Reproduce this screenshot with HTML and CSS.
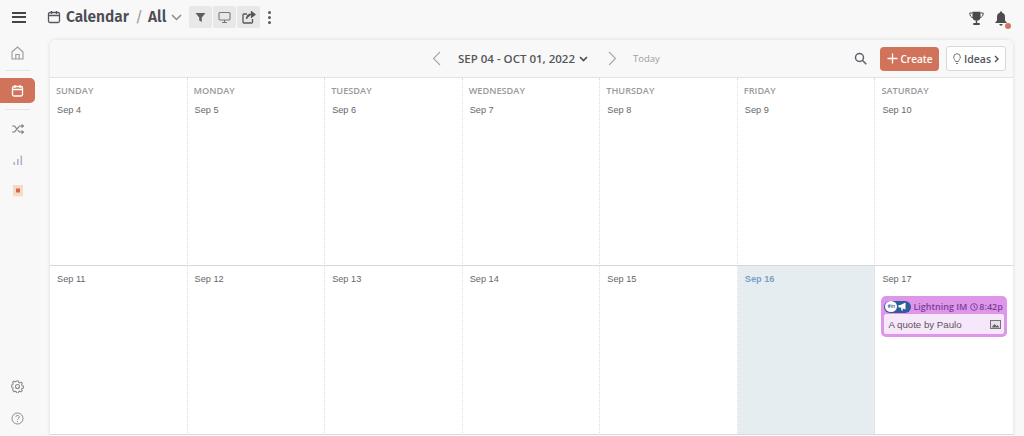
FILE: index.html
```html
<!DOCTYPE html>
<html lang="en">
<head>
<meta charset="utf-8">
<title>Calendar</title>
<link rel="stylesheet" href="styles.css">
</head>
<body>
<header class="topbar">
  <button class="burger" aria-label="Menu"><span></span><span></span><span></span></button>
  <div class="crumbs">
    <svg class="crumb-icon" width="14" height="14" viewBox="0 0 14 14" fill="none" stroke="#5a5560" stroke-width="1.3"><rect x="1.5" y="2.5" width="11" height="10" rx="1.5"/><path d="M1.5 5.5h11M4.5 1v3M9.5 1v3"/></svg>
    <span class="crumb-title">Calendar</span>
    <span class="crumb-sep">/</span>
    <span class="crumb-all">All</span>
    <svg width="11" height="7" viewBox="0 0 11 7" fill="none" stroke="#8a8a90" stroke-width="1.5"><path d="M1 1l4.5 4.5L10 1"/></svg>
  </div>
  <div class="tools">
    <span class="tool"><svg width="11" height="11" viewBox="0 0 11 11" fill="#5c5c62"><path d="M0.5 1h10L6.8 5.6V10L4.2 8.6V5.6z"/></svg></span>
    <span class="tool"><svg width="13" height="13" viewBox="0 0 13 13" fill="none" stroke="#77777c" stroke-width="1.1"><rect x="1" y="1.5" width="11" height="7.5" rx="1"/><path d="M6.5 9v2M4 11.5h5"/></svg></span>
    <span class="tool"><svg width="14" height="13" viewBox="0 0 14 13" fill="none" stroke="#55555c" stroke-width="1.3"><path d="M10.5 8v3a1 1 0 0 1-1 1H2a1 1 0 0 1-1-1V4a1 1 0 0 1 1-1h3"/><path d="M13 3.5L9.5 0.8v5.4zM9.5 3.2C7 3.2 4.8 4.6 4.5 8" fill="#55555c"/></svg></span>
    <span class="kebab"><i></i><i></i><i></i></span>
  </div>
  <div class="top-right">
    <svg width="15" height="15" viewBox="0 0 15 15" fill="#4e4a4a"><path d="M3.5 0.8h8v5a4 4 0 0 1-8 0z"/><path d="M3.5 2H0.8c0 2.6 1 4.2 3.2 4.6M11.500 2h2.700c0 2.600-1 4.200-3.200 4.600" fill="none" stroke="#4e4a4a" stroke-width="1"/><path d="M6.800 9.500h1.400v2.500H6.800zM4.300 12h6.400v2H4.300z"/></svg>
    <span class="bell">
      <svg width="14" height="16" viewBox="0 0 14 16" fill="#4e4a4e"><path d="M7 0.500c.8 0 1.200.5 1.200 1.200C10.400 2.300 11 4 11 6v3.500l2 2.500H1l2-2.500V6c0-2 .6-3.700 2.800-4.300C5.800 1 6.200.500 7 .500zM5.300 13h3.400a1.700 1.700 0 0 1-3.400 0z"/></svg>
      <i class="bell-dot"></i>
    </span>
  </div>
</header>
<div class="main">
  <nav class="side">
    <div class="side-top">
      <span class="side-item"><svg width="13" height="14" viewBox="0 0 13 14" fill="none" stroke="#9a9a9f" stroke-width="1.1"><path d="M1 6l5.500-5L12 6v7H1z"/><path d="M4.800 13V8.500h3.400V13"/></svg></span>
      <span class="side-rule"></span>
      <span class="side-item active"><svg width="13" height="13" viewBox="0 0 13 13" fill="none" stroke="#fff" stroke-width="1.300"><rect x="1.500" y="2.500" width="10" height="9.500" rx="1.500"/><path d="M1.500 5.500h10M4 1v3M9 1v3"/></svg></span>
      <span class="side-rule"></span>
      <span class="side-item"><svg width="12" height="10" viewBox="0 0 12 10" fill="none" stroke="#85858a" stroke-width="1.200"><path d="M0 2h2.500l5 6H11M0 8h2.500l5-6H11M9.500 0.500L11.500 2l-2 1.500M9.500 6.500L11.500 8l-2 1.500"/></svg></span>
      <span class="side-item"><svg width="10" height="10" viewBox="0 0 10 10" fill="#a9b6c8"><rect x="0.500" y="7" width="1.600" height="3"/><rect x="4" y="4" width="1.600" height="6"/><rect x="7.500" y="0.500" width="1.600" height="9.500"/></svg></span>
      <span class="side-item"><svg width="10" height="12" viewBox="0 0 10 12"><path d="M0 0h10v12l-2-1.500-1.500 1.500L5 10.500 3.500 12 2 10.500 0 12z" fill="#f5dac5"/><rect x="3" y="3.500" width="4" height="4" fill="#d9674e"/></svg></span>
    </div>
    <div class="side-bottom">
      <span class="side-item"><svg width="13" height="13" viewBox="0 0 13 13" fill="none" stroke="#8a8a92" stroke-width="1.100"><circle cx="6.500" cy="6.500" r="2"/><path d="M5.500 1h2l.3 1.500 1.300.6 1.300-.8 1.400 1.400-.8 1.300.6 1.300 1.400.3v2l-1.500.3-.6 1.200.8 1.300-1.400 1.400-1.300-.8-1.300.5-.2 1.500h-2l-.3-1.500-1.300-.5-1.300.8L1.200 10.400l.8-1.300-.5-1.200L0 7.500v-2l1.500-.3.500-1.300-.8-1.300L2.600 1.200l1.300.8 1.300-.6z" transform="scale(.93) translate(.4 0)"/></svg></span>
      <span class="side-item"><svg width="13" height="13" viewBox="0 0 13 13" fill="none" stroke="#8a8a92" stroke-width="1"><circle cx="6.500" cy="6.500" r="5.500"/><path d="M4.800 5.200c0-2.300 3.500-2.300 3.500-.2 0 1.300-1.800 1.500-1.800 2.800M6.500 9v1"/></svg></span>
    </div>
  </nav>
  <section class="card">
    <div class="toolbar">
      <div class="range">
        <svg width="9" height="15" viewBox="0 0 9 15" fill="none" stroke="#a8a8a8" stroke-width="1.100"><path d="M8 1L1.500 7.500 8 14"/></svg>
        <span class="range-text">SEP 04 - OCT 01, 2022</span>
        <svg class="range-caret" width="9" height="6" viewBox="0 0 9 6" fill="none" stroke="#4f4f55" stroke-width="1.700"><path d="M1 1l3.500 3.500L8 1"/></svg>
        <svg class="range-next" width="9" height="15" viewBox="0 0 9 15" fill="none" stroke="#a8a8a8" stroke-width="1.100"><path d="M1 1l6.500 6.500L1 14"/></svg>
        <span class="today">Today</span>
      </div>
      <div class="actions">
        <svg width="13" height="13" viewBox="0 0 13 13" fill="none" stroke="#5f6068" stroke-width="1.500"><circle cx="5.500" cy="5.500" r="4"/><path d="M8.500 8.500l3.800 3.800"/></svg>
        <span class="create"><svg width="11" height="11" viewBox="0 0 11 11" stroke="#fff" stroke-width="1.300"><path d="M5.500 0.500v10M0.500 5.500h10"/></svg>Create</span>
        <span class="ideas"><svg width="8" height="12" viewBox="0 0 8 12" fill="none" stroke="#77777c" stroke-width="1"><path d="M2.500 8.500C2.200 6.800.7 6.200.7 4a3.300 3.300 0 0 1 6.600 0c0 2.200-1.500 2.800-1.800 4.500zM3 10.500h2"/></svg>Ideas<svg width="5" height="8" viewBox="0 0 5 8" fill="none" stroke="#4f4f55" stroke-width="1.400"><path d="M1 1l3 3-3 3"/></svg></span>
      </div>
    </div>
    <div class="calendar">
      <div class="cell row-one"><div class="dow">SUNDAY</div><div class="date">Sep 4</div></div>
      <div class="cell row-one"><div class="dow">MONDAY</div><div class="date">Sep 5</div></div>
      <div class="cell row-one"><div class="dow">TUESDAY</div><div class="date">Sep 6</div></div>
      <div class="cell row-one"><div class="dow">WEDNESDAY</div><div class="date">Sep 7</div></div>
      <div class="cell row-one"><div class="dow">THURSDAY</div><div class="date">Sep 8</div></div>
      <div class="cell row-one"><div class="dow">FRIDAY</div><div class="date">Sep 9</div></div>
      <div class="cell row-one"><div class="dow">SATURDAY</div><div class="date">Sep 10</div></div>
      <div class="cell row-two"><div class="date">Sep 11</div></div>
      <div class="cell row-two"><div class="date">Sep 12</div></div>
      <div class="cell row-two"><div class="date">Sep 13</div></div>
      <div class="cell row-two"><div class="date">Sep 14</div></div>
      <div class="cell row-two"><div class="date">Sep 15</div></div>
      <div class="cell row-two current"><div class="date">Sep 16</div></div>
      <div class="cell row-two">
        <div class="date">Sep 17</div>
        <div class="event">
          <div class="event-head">
            <span class="pill"><span class="pill-logo">#in</span><svg width="9" height="9" viewBox="0 0 9 9" fill="#fff"><path d="M0.500 3h2L7.500 0.500v7L2.500 5.500h-2zM3 6h1.500l.5 2.500H3.500z"/></svg></span>
            <span class="event-name">Lightning IM</span>
            <svg width="8" height="8" viewBox="0 0 8 8" fill="none" stroke="#7d3f95" stroke-width=".9"><circle cx="4" cy="4" r="3.400"/><path d="M4 2v2.200l1.500.8"/></svg>
            <span class="event-time">8:42p</span>
          </div>
          <div class="event-body"><span>A quote by Paulo</span><svg width="11" height="9" viewBox="0 0 11 9"><rect x=".5" y=".5" width="10" height="8" fill="#e6e0e8" stroke="#77727c"/><path d="M1.500 7.500l3-3.500 2 2 1-1 2 2.500z" fill="#66606c"/></svg></div>
        </div>
      </div>
    </div>
  </section>
</div>
</body>
</html>
```
FILE: styles.css
```css
* { box-sizing: border-box; }
html, body { height: 100%; }
body {
  margin: 0;
  background: #f8f8f8;
  font-family: "Liberation Sans", Arial, sans-serif;
  overflow: hidden;
  color: #55555a;
}
.topbar {
  height: 40px;
  display: flex;
  align-items: center;
  padding: 0 15px 6px 12px;
}
.burger {
  width: 14px;
  height: 11px;
  padding: 0;
  border: 0;
  background: none;
  display: flex;
  flex-direction: column;
  justify-content: space-between;
}
.burger span { display: block; height: 2px; background: #44444a; }
.crumbs {
  display: flex;
  align-items: center;
  margin-left: 21px;
  font-family: "Fira Sans", "Open Sans", sans-serif;
  font-size: 15.5px;
  font-weight: 600;
  color: #4d4d55;
}
.crumb-title { margin-left: 5px; }
.crumb-sep { margin: 0 5px 0 6px; font-weight: 400; color: #9a9aa0; }
.crumb-all { margin-right: 5px; }
.tools { display: flex; align-items: center; gap: 1px; margin-left: 7px; }
.tool {
  width: 23px;
  height: 22px;
  background: #e8e8e8;
  border-radius: 2px;
  display: flex;
  align-items: center;
  justify-content: center;
}
.kebab { display: flex; flex-direction: column; gap: 2px; margin-left: 7px; }
.kebab i { width: 3px; height: 3px; border-radius: 50%; background: #5a5a60; }
.top-right { margin-left: auto; display: flex; align-items: center; gap: 10px; padding-top: 3px; }
.bell { display: flex; position: relative; margin-right: 1px; }
.bell-dot {
  position: absolute;
  right: -3px;
  bottom: -2px;
  width: 6px;
  height: 6px;
  border-radius: 50%;
  background: #d0755b;
}
.main { display: flex; height: 396px; }
.side {
  width: 50px;
  flex: none;
  display: flex;
  flex-direction: column;
  justify-content: space-between;
  padding: 1px 15px 6px 0;
}
.side-top { display: flex; flex-direction: column; align-items: center; }
.side-item { width: 35px; height: 24px; display: flex; align-items: center; justify-content: center; }
.side-rule { width: 25px; height: 1px; background: #e6e6e6; }
.side-top .side-rule:nth-child(2) { margin: 5px 0 7px; }
.side-top .side-rule:nth-child(4) { margin: 6px 0 7px; }
.side-top .side-item:nth-child(6) { margin: 7px 0; }
.side-item.active { height: 25px; background: #d0735a; border-radius: 0 5px 5px 0; }
.side-bottom { display: flex; flex-direction: column; gap: 8px; }
.card {
  width: 963px;
  height: 396px;
  background: #fff;
  border-radius: 6px 6px 0 0;
  box-shadow: 0 0 4px rgba(0,0,0,.12);
  display: flex;
  flex-direction: column;
}
.toolbar {
  height: 38px;
  flex: none;
  background: #f8f8f8;
  border-radius: 6px 6px 0 0;
  border-bottom: 1px solid #e3e3e3;
  display: flex;
  align-items: center;
  position: relative;
  padding: 0 7px 0 382px;
}
.range { display: flex; align-items: center; }
.range-text {
  margin-left: 17px;
  font-family: "Open Sans", sans-serif;
  font-size: 11.5px;
  font-weight: 600;
  color: #55555c;
}
.range-caret { margin-left: 4px; }
.range-next { margin-left: 20px; }
.today { margin-left: 16px; font-family: "Open Sans", sans-serif; font-size: 9.5px; color: #9c9c9c; }
.actions { margin-left: auto; display: flex; align-items: center; }
.create {
  margin-left: 13px;
  width: 59px;
  height: 24px;
  background: #d0735a;
  border-radius: 4px;
  color: #fff;
  font-family: "Open Sans", sans-serif;
  font-size: 10px;
  font-weight: 600;
  display: flex;
  align-items: center;
  justify-content: center;
  gap: 3px;
}
.ideas {
  margin-left: 7px;
  width: 60px;
  height: 25px;
  border: 1px solid #d8d8d8;
  border-radius: 3px;
  background: #fff;
  color: #55555c;
  font-family: "Open Sans", sans-serif;
  font-size: 10.5px;
  font-weight: 600;
  display: flex;
  align-items: center;
  justify-content: center;
  gap: 3px;
}
.calendar {
  display: grid;
  grid-template-columns: repeat(7, 137.57px);
  grid-template-rows: 188px 169px;
}
.cell {
  border-right: 1px dotted #dcdcdc;
  border-bottom: 1px solid #d8d8d8;
  padding: 8px 6px 0 6px;
  min-width: 0;
}
.cell:nth-child(7n) { border-right: 0; }
.row-two { padding-top: 8px; }
.current { background: #e6edf1; }
.current .date { color: #7f9fc6; font-weight: 700; }
.dow {
  height: 14px;
  line-height: 10px;
  font-family: "Open Sans", sans-serif;
  font-size: 9.2px;
  font-weight: 600;
  color: #9a9a9c;
}
.date {
  margin-top: 5px;
  padding-left: 1px;
  font-size: 9.2px;
  line-height: 11px;
  color: #666669;
}
.row-two .date { margin-top: 0; }
.event {
  margin: 11px 0 0 0;
  width: 126px;
  height: 41px;
  background: #dd96ea;
  border-radius: 5px;
  padding: 3px;
}
.event-head {
  height: 15px;
  display: flex;
  align-items: center;
  font-family: "Open Sans", sans-serif;
  font-size: 9px;
  font-weight: 600;
  color: #7d3f95;
  white-space: nowrap;
}
.pill {
  width: 27px;
  height: 12px;
  margin-right: 2px;
  padding-left: 1px;
  background: #2f5c99;
  border-radius: 6px;
  display: flex;
  align-items: center;
  gap: 1px;
  flex: none;
}
.pill-logo {
  width: 12px;
  height: 11px;
  border-radius: 50%;
  background: #fff;
  color: #2f5c99;
  font-size: 5px;
  line-height: 11px;
  text-align: center;
}
.event-name { margin-right: 3px; }
.event-time { margin-left: 1px; }
.event-body {
  height: 20px;
  background: #f7e7fb;
  border-radius: 2px;
  display: flex;
  align-items: center;
  justify-content: space-between;
  padding: 0 3px 0 4px;
  font-size: 9.7px;
  color: #5b5560;
}
```
